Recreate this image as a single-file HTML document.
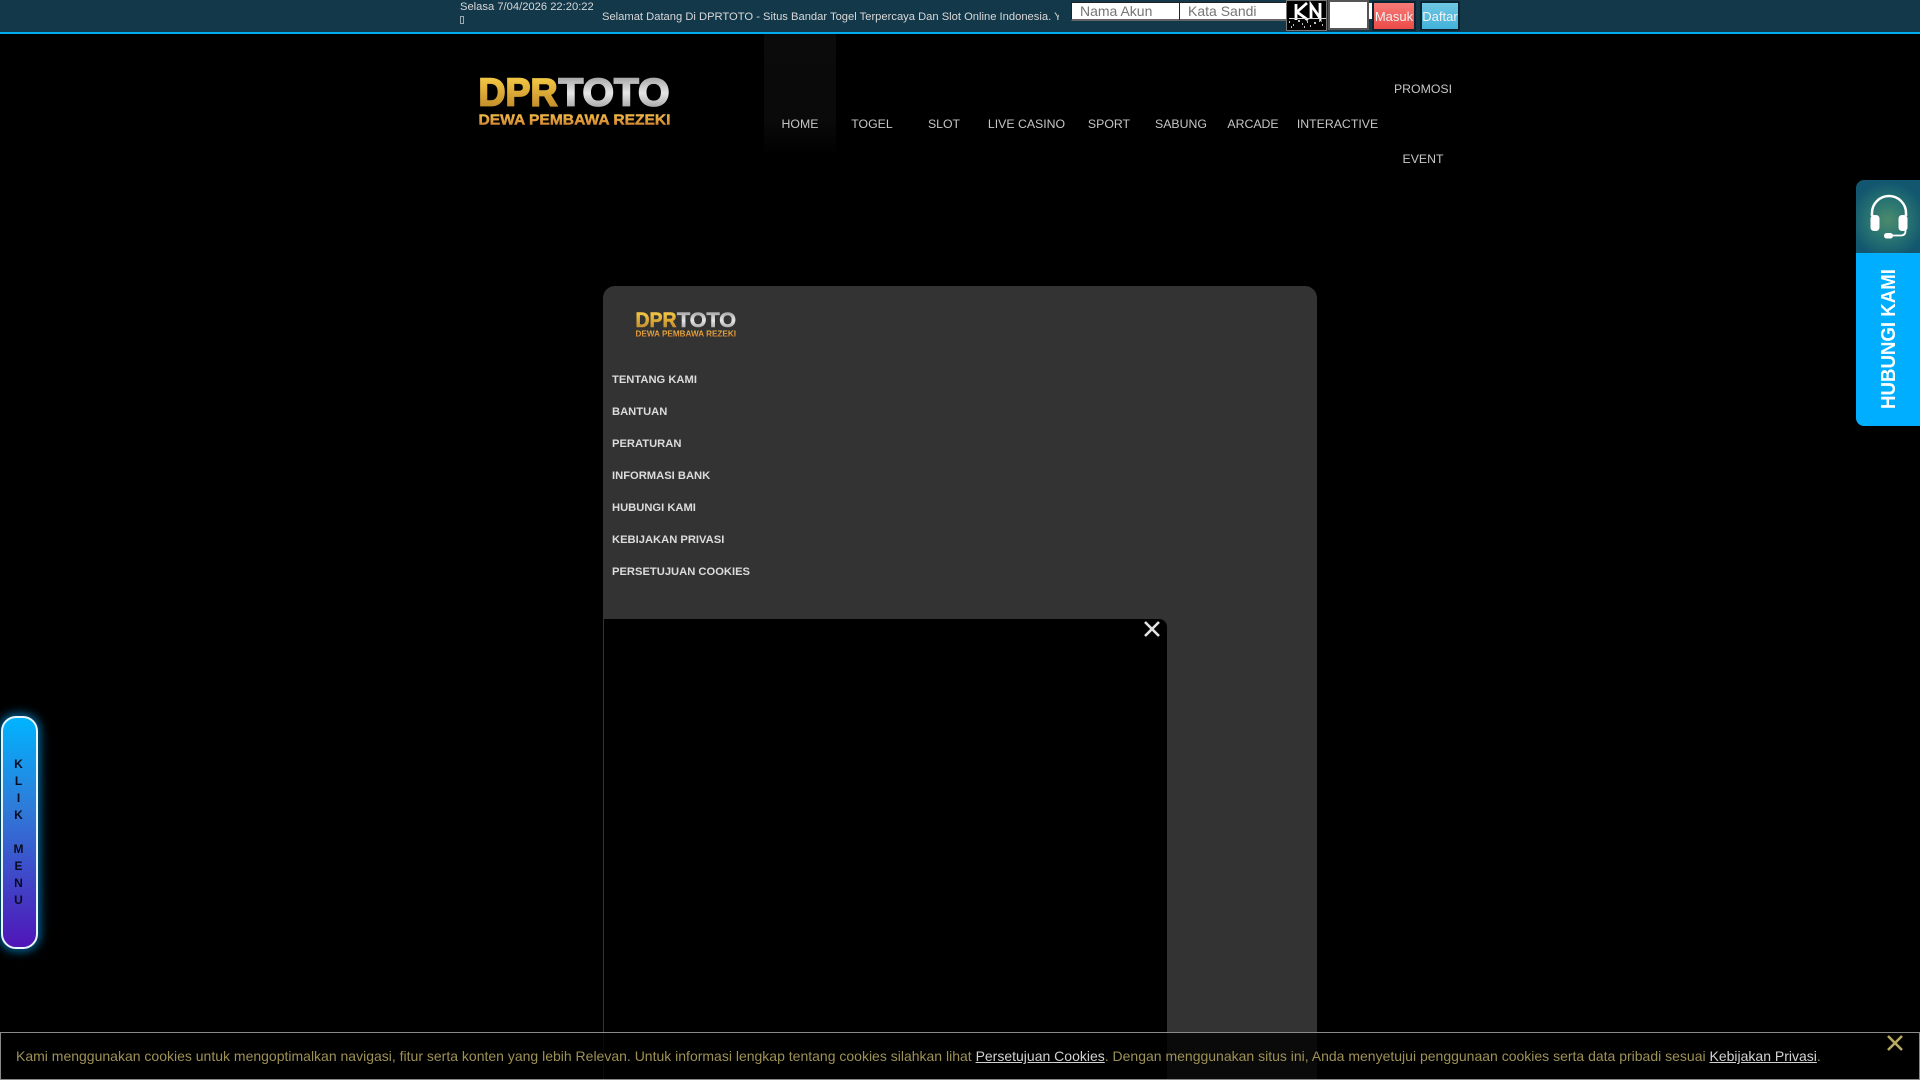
<!DOCTYPE html>
<html lang="id">
<head>
<meta charset="utf-8">
<title>DPRTOTO</title>
<style>
html,body{margin:0;padding:0;width:1920px;height:1080px;overflow:hidden;background:#000;font-family:"Liberation Sans",Arial,sans-serif}
.a{position:absolute;white-space:nowrap}
#top{left:0;top:0;width:1920px;height:32px;background:#13384a;border-bottom:2px solid #00aeef}
.t{font-size:11.2px;line-height:13px;color:#d8d8d8}
.inp{top:2px;height:16px;width:107px;background:#fff;border-top:1px solid #222;border-left:1px solid #222;border-bottom:2px solid #666;font-size:14px;line-height:16px;color:#757575;text-indent:8px;box-sizing:content-box}
.btn{top:2px;height:26px;border:1px solid #0b2430;box-shadow:0 0 0 1px #0a2532;font-size:13px;line-height:27px;color:#f2f2f2;text-align:center;overflow:hidden}
.nav{font-size:12.3px;line-height:14px;color:#c6c6c6;transform:translateX(-50%)}
#panel{left:603px;top:286px;width:714px;height:794px;background:#333;border-radius:12px 12px 0 0}
.lnk{left:612px;font-size:11.2px;font-weight:bold;line-height:13px;color:#dcdcdc}
#modal{left:604px;top:619px;width:563px;height:461px;background:#000;border-radius:0 8px 0 0}
#cookie{left:0;top:1032px;width:1918px;height:46px;box-sizing:content-box;background:rgba(0,0,0,.8);border:1px solid #8a8a8a}
#cookie .txt{position:absolute;left:15px;top:14px;font-size:14px;line-height:18px;color:#9d9155;white-space:nowrap}
#cookie u{color:#d2d2d2}
#klik{left:0.500px;top:716px;width:37px;height:233px;box-sizing:border-box;border:2px solid #e8f6ff;border-radius:15px;background:linear-gradient(#00b4ff,#2f7ad8 40%,#5015b8);box-shadow:0 0 9px 3px rgba(0,170,255,.55)}
.k{left:18.500px;transform:translateX(-50%);font-size:12px;font-weight:bold;line-height:14px;color:#0a0a20}
#chat1{left:1856px;top:180px;width:64px;height:73px;border-radius:8px 0 0 0;background:radial-gradient(circle at 50% 55%,#4e8a6c 0,#2a7672 35%,#12566f 75%)}
#chat2{left:1856px;top:253px;width:64px;height:173px;border-radius:0 0 0 8px;background:#00aeff}
</style>
</head>
<body>

<div class="a" id="top"></div>
<div class="a t" style="left:460px;top:0.500px">Selasa 7/04/2026 22:20:22</div>
<div class="a" style="left:460px;top:16px;width:2px;height:6px;border:1px solid #9aa8b0"></div>
<div class="a t" style="left:602px;top:10.500px;width:457px;overflow:hidden">Selamat Datang Di DPRTOTO - Situs Bandar Togel Terpercaya Dan Slot Online Indonesia. Yuk</div>

<div class="a inp" style="left:1071px">Nama Akun</div>
<div class="a inp" style="left:1179px">Kata Sandi</div>
<div class="a" style="left:1286px;top:0;width:39px;height:29px;background:#000;border:1px solid #777;overflow:hidden">
<svg width="39" height="29" viewBox="0 0 39 29">
<g stroke="#fff" fill="none" stroke-width="2.8"><path d="M9 3V19M20 2L10 11L21 19"/><path d="M24 18V4L33 17V2"/></g>
<path d="M2 17.500H39" stroke="#ddd" stroke-width="1"/>
<path d="M2 21h1M6 24h1M11 20h2M15 23h1M20 21h1M23 25h1M27 22h2M32 20h1M35 24h1M4 26h1M17 26h1" stroke="#fff" stroke-width="1.4"/>
</svg>
</div>
<div class="a" style="left:1328px;top:0;width:37px;height:26px;background:#fff;border:2px solid #555"></div>
<div class="a" style="left:1368px;top:3px;width:3px;height:16px;background:#fff;border-left:1px solid #555"></div>
<div class="a btn" style="left:1373px;width:40px;background:linear-gradient(#f77b78,#ec4b48)">Masuk</div>
<div class="a btn" style="left:1421px;width:36px;background:linear-gradient(#6fc6e2,#42b2da)">Daftar</div>

<svg class="a" style="left:476px;top:74px" width="200" height="56" viewBox="0 0 200 56">
<defs>
<linearGradient id="g1" x1="0" y1="0" x2="0" y2="1"><stop offset="0" stop-color="#fdd44a"/><stop offset="1" stop-color="#b87f24"/></linearGradient>
<linearGradient id="g2" x1="0" y1="0" x2="0" y2="1"><stop offset="0" stop-color="#8f8f8f"/><stop offset=".5" stop-color="#e6e6e6"/><stop offset="1" stop-color="#8c8c8c"/></linearGradient>
<linearGradient id="g3" x1="0" y1="0" x2="0" y2="1"><stop offset="0" stop-color="#f5c24a"/><stop offset="1" stop-color="#c8752c"/></linearGradient>
</defs>
<text x="2.500" y="31.500" font-family="Liberation Sans" font-weight="bold" font-size="39" fill="url(#g1)" stroke="url(#g1)" stroke-width="1.8" textLength="79" lengthAdjust="spacingAndGlyphs">DPR</text>
<text x="82.500" y="31.500" font-family="Liberation Sans" font-weight="bold" font-size="39" fill="url(#g2)" stroke="url(#g2)" stroke-width="1.8" textLength="111" lengthAdjust="spacingAndGlyphs">TOTO</text>
<text x="2.500" y="50.500" font-family="Liberation Sans" font-weight="bold" font-size="14.500" fill="url(#g3)" stroke="url(#g3)" stroke-width=".4" textLength="192" lengthAdjust="spacingAndGlyphs">DEWA PEMBAWA REZEKI</text>
</svg>

<div class="a" style="left:764px;top:34px;width:72px;height:122px;background:linear-gradient(#0b0b0b,#0a0a0a 70%,#000)"></div>
<div class="a nav" style="left:800px;top:117px">HOME</div>
<div class="a nav" style="left:872px;top:117px">TOGEL</div>
<div class="a nav" style="left:944px;top:117px">SLOT</div>
<div class="a nav" style="left:1026.500px;top:117px">LIVE CASINO</div>
<div class="a nav" style="left:1109px;top:117px">SPORT</div>
<div class="a nav" style="left:1181px;top:117px">SABUNG</div>
<div class="a nav" style="left:1253px;top:117px">ARCADE</div>
<div class="a nav" style="left:1337.500px;top:117px">INTERACTIVE</div>
<div class="a nav" style="left:1423px;top:82px">PROMOSI</div>
<div class="a nav" style="left:1423px;top:152px">EVENT</div>

<div class="a" id="panel"></div>
<svg class="a" style="left:633px;top:308px" width="108" height="32" viewBox="0 0 108 32">
<text x="2.500" y="19" font-family="Liberation Sans" font-weight="bold" font-size="21" fill="url(#g1)" stroke="url(#g1)" stroke-width=".6" textLength="41" lengthAdjust="spacingAndGlyphs">DPR</text>
<text x="44" y="19" font-family="Liberation Sans" font-weight="bold" font-size="21" fill="url(#g2)" stroke="url(#g2)" stroke-width=".6" textLength="59" lengthAdjust="spacingAndGlyphs">TOTO</text>
<text x="2.500" y="28.500" font-family="Liberation Sans" font-weight="bold" font-size="8.500" fill="url(#g3)" textLength="100.500" lengthAdjust="spacingAndGlyphs">DEWA PEMBAWA REZEKI</text>
</svg>
<div class="a lnk" style="top:374px">TENTANG KAMI</div>
<div class="a lnk" style="top:406px">BANTUAN</div>
<div class="a lnk" style="top:438px">PERATURAN</div>
<div class="a lnk" style="top:470px">INFORMASI BANK</div>
<div class="a lnk" style="top:502px">HUBUNGI KAMI</div>
<div class="a lnk" style="top:534px">KEBIJAKAN PRIVASI</div>
<div class="a lnk" style="top:566px">PERSETUJUAN COOKIES</div>

<div class="a" id="modal"></div>
<svg class="a" style="left:1144px;top:621px" width="16" height="16" viewBox="0 0 16 16"><path d="M1 1L15 15M15 1L1 15" stroke="#e4e4e4" stroke-width="2.6" fill="none"/></svg>

<div class="a" id="cookie">
<div class="txt">Kami menggunakan cookies untuk mengoptimalkan navigasi, fitur serta konten yang lebih Relevan. Untuk informasi lengkap tentang cookies silahkan lihat <u>Persetujuan Cookies</u>. Dengan menggunakan situs ini, Anda menyetujui penggunaan cookies serta data pribadi sesuai <u>Kebijakan Privasi</u>.</div>
</div>
<svg class="a" style="left:1887px;top:1035px" width="16" height="16" viewBox="0 0 16 16"><path d="M1 1L15 15M15 1L1 15" stroke="#b9aa62" stroke-width="2.6" fill="none"/></svg>

<div class="a" id="klik"></div>
<div class="a k" style="top:757px">K</div>
<div class="a k" style="top:774px">L</div>
<div class="a k" style="top:791px">I</div>
<div class="a k" style="top:808px">K</div>
<div class="a k" style="top:842px">M</div>
<div class="a k" style="top:859px">E</div>
<div class="a k" style="top:876px">N</div>
<div class="a k" style="top:893px">U</div>

<div class="a" id="chat1"></div>
<svg class="a" style="left:1856px;top:180px" width="64" height="73" viewBox="0 0 64 73">
<path d="M16 36V33A17 17 0 0 1 50 33V36" fill="none" stroke="#fff" stroke-width="2.5"/>
<rect x="14.500" y="35" width="9" height="16" rx="3.500" fill="#fff"/>
<rect x="42.500" y="35" width="9" height="16" rx="3.500" fill="#fff"/>
<path d="M49.500 50V51Q49.500 55.500 44.500 55.500H36" fill="none" stroke="#fff" stroke-width="1.800"/>
<rect x="28" y="53" width="9" height="5.500" rx="2.700" fill="#fff"/>
</svg>
<div class="a" id="chat2"></div>
<svg class="a" style="left:1856px;top:253px" width="64" height="173" viewBox="0 0 64 173">
<text transform="translate(39,156) rotate(-90)" font-family="Liberation Sans" font-weight="bold" font-size="20" fill="#fff" textLength="140" lengthAdjust="spacingAndGlyphs">HUBUNGI KAMI</text>
</svg>

</body>
</html>
